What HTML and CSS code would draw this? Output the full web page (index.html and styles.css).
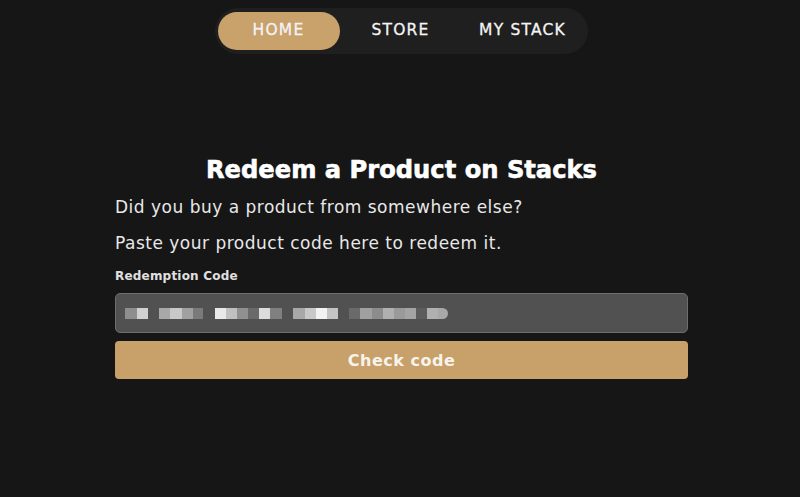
FILE: index.html
```html
<!DOCTYPE html>
<html lang="en">
<head>
<meta charset="utf-8">
<title>Redeem a Product on Stacks</title>
<link rel="stylesheet" href="styles.css">
</head>
<body>
<header class="top">
  <nav class="nav">
    <a class="nav-item active" href="#">HOME</a>
    <a class="nav-item" href="#">STORE</a>
    <a class="nav-item" href="#">MY STACK</a>
  </nav>
</header>
<main class="redeem">
  <h1 class="title">Redeem a Product on Stacks</h1>
  <p class="lead">Did you buy a product from somewhere else?</p>
  <p class="lead">Paste your product code here to redeem it.</p>
  <label class="label" for="code">Redemption Code</label>
  <div class="input" id="code">
    <span class="px" style="width:12px;background:#8e8e8e"></span>
    <span class="px" style="width:11px;background:#d0d0d0"></span>
    <span class="px" style="width:11px"></span>
    <span class="px" style="width:11px;background:#a8a8a8"></span>
    <span class="px" style="width:12px;background:#c8c8c8"></span>
    <span class="px" style="width:11px;background:#a0a0a0"></span>
    <span class="px" style="width:10px;background:#7a7a7a"></span>
    <span class="px" style="width:12px"></span>
    <span class="px" style="width:11px;background:#e8e8e8"></span>
    <span class="px" style="width:11px;background:#c0c0c0"></span>
    <span class="px" style="width:11px;background:#909090"></span>
    <span class="px" style="width:11px;background:#6a6a6a"></span>
    <span class="px" style="width:11px;background:#dcdcdc"></span>
    <span class="px" style="width:12px;background:#808080"></span>
    <span class="px" style="width:11px"></span>
    <span class="px" style="width:12px;background:#a8a8a8"></span>
    <span class="px" style="width:11px;background:#c8c8c8"></span>
    <span class="px" style="width:11px;background:#f2f2f2"></span>
    <span class="px" style="width:11px;background:#c4c4c4"></span>
    <span class="px" style="width:11px"></span>
    <span class="px" style="width:11px;background:#6a6a6a"></span>
    <span class="px" style="width:12px;background:#a0a0a0"></span>
    <span class="px" style="width:11px;background:#8c8c8c"></span>
    <span class="px" style="width:11px;background:#b0b0b0"></span>
    <span class="px" style="width:11px;background:#9a9a9a"></span>
    <span class="px" style="width:11px;background:#a4a4a4"></span>
    <span class="px" style="width:11px;background:#5c5c5c"></span>
    <span class="px" style="width:11px;background:#b0b0b0"></span>
    <span class="px end" style="width:10px;background:#a8a8a8"></span>
  </div>
  <button class="check" type="button">Check code</button>
</main>
</body>
</html>
```
FILE: styles.css
```css
* { box-sizing: border-box; }
html, body {
  margin: 0;
  background: #161616;
  color: #f2f2f2;
  font-family: "DejaVu Sans", "Liberation Sans", sans-serif;
}
body { min-height: 497px; }

.top {
  display: flex;
  justify-content: center;
  padding-top: 8px;
  padding-left: 2px;
}
.nav {
  display: grid;
  grid-template-columns: repeat(3, 122px);
  padding: 4px 4px 4px 3px;
  background: #1f1f1f;
  border-radius: 23px;
}
.nav-item {
  display: flex;
  align-items: center;
  justify-content: center;
  height: 38px;
  padding-bottom: 3px;
  color: #f4f4f4;
  text-decoration: none;
  font-family: "DejaVu Sans", sans-serif;
  font-size: 15.5px;
  font-weight: 400;
  letter-spacing: 1.2px;
  -webkit-text-stroke: 0.3px #f4f4f4;
}
.nav-item.active {
  background: #c9a16b;
  border-radius: 19px;
}

.redeem {
  width: 573px;
  margin: 0 auto;
  padding-top: 99px;
  padding-left: 3px;
  display: flex;
  flex-direction: column;
  box-sizing: content-box;
}
.title {
  margin: 0 0 8px;
  text-align: center;
  font-size: 24.2px;
  font-weight: 700;
  line-height: 34px;
  color: #ffffff;
  -webkit-text-stroke: 0.6px #ffffff;
}
.lead {
  margin: 0 0 11px;
  font-size: 17px;
  line-height: 25px;
  letter-spacing: 0.5px;
  color: #e8e8e8;
}
.label {
  margin-top: 0;
  font-size: 12px;
  font-weight: 700;
  letter-spacing: 0.2px;
  line-height: 18px;
  color: #e0e0e0;
  margin-bottom: 8px;
}
.input {
  height: 40px;
  background: #515151;
  border: 1px solid #6d6d6d;
  border-radius: 5px;
  display: flex;
  align-items: center;
  padding-left: 9px;
  padding-top: 1px;
}
.px { display: block; height: 11px; }
.px.end { border-radius: 0 6px 6px 0; }
.check {
  margin-top: 8px;
  height: 38px;
  border: 0;
  border-radius: 4px;
  background: #c8a06a;
  color: #f7f3ec;
  font-family: "DejaVu Sans", "Liberation Sans", sans-serif;
  font-size: 16px;
  font-weight: 700;
  letter-spacing: 0.5px;
  cursor: pointer;
}
```
